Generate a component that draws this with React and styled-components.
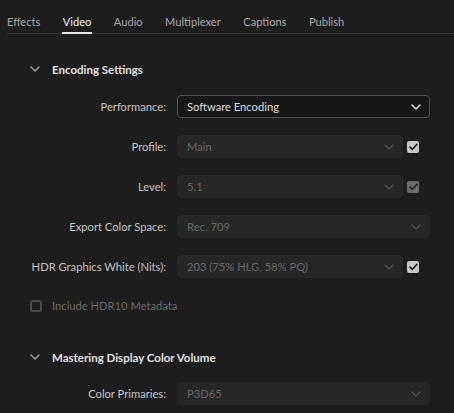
import React from "react";
import styled, { createGlobalStyle } from "styled-components";

const GlobalStyle = createGlobalStyle`
  html, body {
    margin: 0;
    background: #1d1d1d;
  }
  body {
    font-family: Lato, "Noto Sans", sans-serif;
    -webkit-font-smoothing: antialiased;
  }
`;

const Panel = styled.div`
  width: 454px;
  height: 413px;
  overflow: hidden;
  background: #1d1d1d;
  color: #c8c8c8;
  font-size: 11px;
`;

const TabBar = styled.div`
  display: flex;
  gap: 22.5px;
  margin: 0 0 0 7px;
  padding-top: 15px;
  border-bottom: 1px solid #343434;
`;

const Tab = styled.div`
  position: relative;
  height: 14px;
  line-height: 14px;
  padding: 0 0 4px;
  font-size: 11.1px;
  color: ${(p) => (p.$active ? "#f0f0f0" : "#a8a8a8")};

  &::after {
    content: "";
    display: ${(p) => (p.$active ? "block" : "none")};
    position: absolute;
    left: -1px;
    right: -1px;
    bottom: -1px;
    height: 2px;
    background: #e8e8e8;
  }
`;

const Section = styled.div`
  padding: 0 24px 0 30px;
`;

const SectionHeader = styled.div`
  display: flex;
  align-items: center;
  gap: 12px;
  height: 20px;
  margin-top: ${(p) => p.$top}px;
  font-weight: 700;
  font-size: 11.5px;
  color: #e2e2e2;
`;

const Form = styled.div`
  display: grid;
  grid-template-columns: 136px 1fr;
  column-gap: 11px;
  row-gap: 17px;
  margin-top: ${(p) => p.$top}px;
`;

const Label = styled.div`
  text-align: right;
  align-self: center;
  font-size: 11.2px;
  color: #c4c4c4;
  white-space: nowrap;
`;

const Control = styled.div`
  display: flex;
  align-items: center;
  gap: 4px;
`;

const Select = styled.div`
  flex: ${(p) => (p.$narrow ? "0 0 226px" : "0 0 253px")};
  box-sizing: border-box;
  height: 23px;
  display: flex;
  align-items: center;
  justify-content: space-between;
  padding: 0 8px 0 9px;
  border-radius: 4px;
  font-size: 11.2px;
  background: ${(p) => (p.$disabled ? "#262626" : "#171717")};
  border: 1px solid ${(p) => (p.$disabled ? "#262626" : "#525252")};
  color: ${(p) => (p.$disabled ? "#676767" : "#dedede")};
`;

const Box = styled.div`
  width: 12px;
  height: 12px;
  box-sizing: border-box;
  border-radius: 2px;
  display: flex;
  align-items: center;
  justify-content: center;
  background: ${(p) =>
    p.$empty ? "transparent" : p.$dim ? "#6a6a6a" : "#c9c9c9"};
  border: ${(p) => (p.$empty ? "2px solid #4a4a4a" : "none")};
`;

const CheckRow = styled.div`
  display: flex;
  align-items: center;
  gap: 10px;
  margin-top: 21px;
  color: #6a6a6a;
  font-size: 11.2px;
`;

const Chevron = ({ color = "#c8c8c8", size = 10 }) => (
  <svg width={size} height={size * 0.6} viewBox="0 0 10 6">
    <path
      d="M1 1l4 4 4-4"
      fill="none"
      stroke={color}
      strokeWidth="1.6"
      strokeLinecap="round"
      strokeLinejoin="round"
    />
  </svg>
);

const Tick = ({ color }) => (
  <svg width="9" height="8" viewBox="0 0 9 8">
    <path
      d="M1 4.2l2.3 2.3L8 1.3"
      fill="none"
      stroke={color}
      strokeWidth="1.7"
      strokeLinecap="round"
      strokeLinejoin="round"
    />
  </svg>
);

const Check = ({ dim }) => (
  <Box $dim={dim}>
    <Tick color={dim ? "#262626" : "#1d1d1d"} />
  </Box>
);

const tabs = ["Effects", "Video", "Audio", "Multiplexer", "Captions", "Publish"];

function Field({ label, value, disabled, check, dimCheck }) {
  return (
    <>
      <Label>{label}</Label>
      <Control>
        <Select $disabled={disabled} $narrow={check}>
          <span>{value}</span>
          <Chevron color={disabled ? "#4a4a4a" : "#d8d8d8"} />
        </Select>
        {check && <Check dim={dimCheck} />}
      </Control>
    </>
  );
}

export default function App() {
  return (
    <Panel>
      <GlobalStyle />
      <TabBar>
        {tabs.map((t) => (
          <Tab key={t} $active={t === "Video"}>
            {t}
          </Tab>
        ))}
      </TabBar>
      <Section>
        <SectionHeader $top={25}>
          <Chevron color="#a0a0a0" />
          Encoding Settings
        </SectionHeader>
        <Form $top={16}>
          <Field label="Performance:" value="Software Encoding" />
          <Field label="Profile:" value="Main" disabled check />
          <Field label="Level:" value="5.1" disabled check dimCheck />
          <Field label="Export Color Space:" value="Rec. 709" disabled />
          <Field
            label="HDR Graphics White (Nits):"
            value="203 (75% HLG, 58% PQ)"
            disabled
            check
          />
        </Form>
        <CheckRow>
          <Box $empty />
          Include HDR10 Metadata
        </CheckRow>
        <SectionHeader $top={35}>
          <Chevron color="#a0a0a0" />
          Mastering Display Color Volume
        </SectionHeader>
        <Form $top={15}>
          <Field label="Color Primaries:" value="P3D65" disabled />
        </Form>
      </Section>
    </Panel>
  );
}
